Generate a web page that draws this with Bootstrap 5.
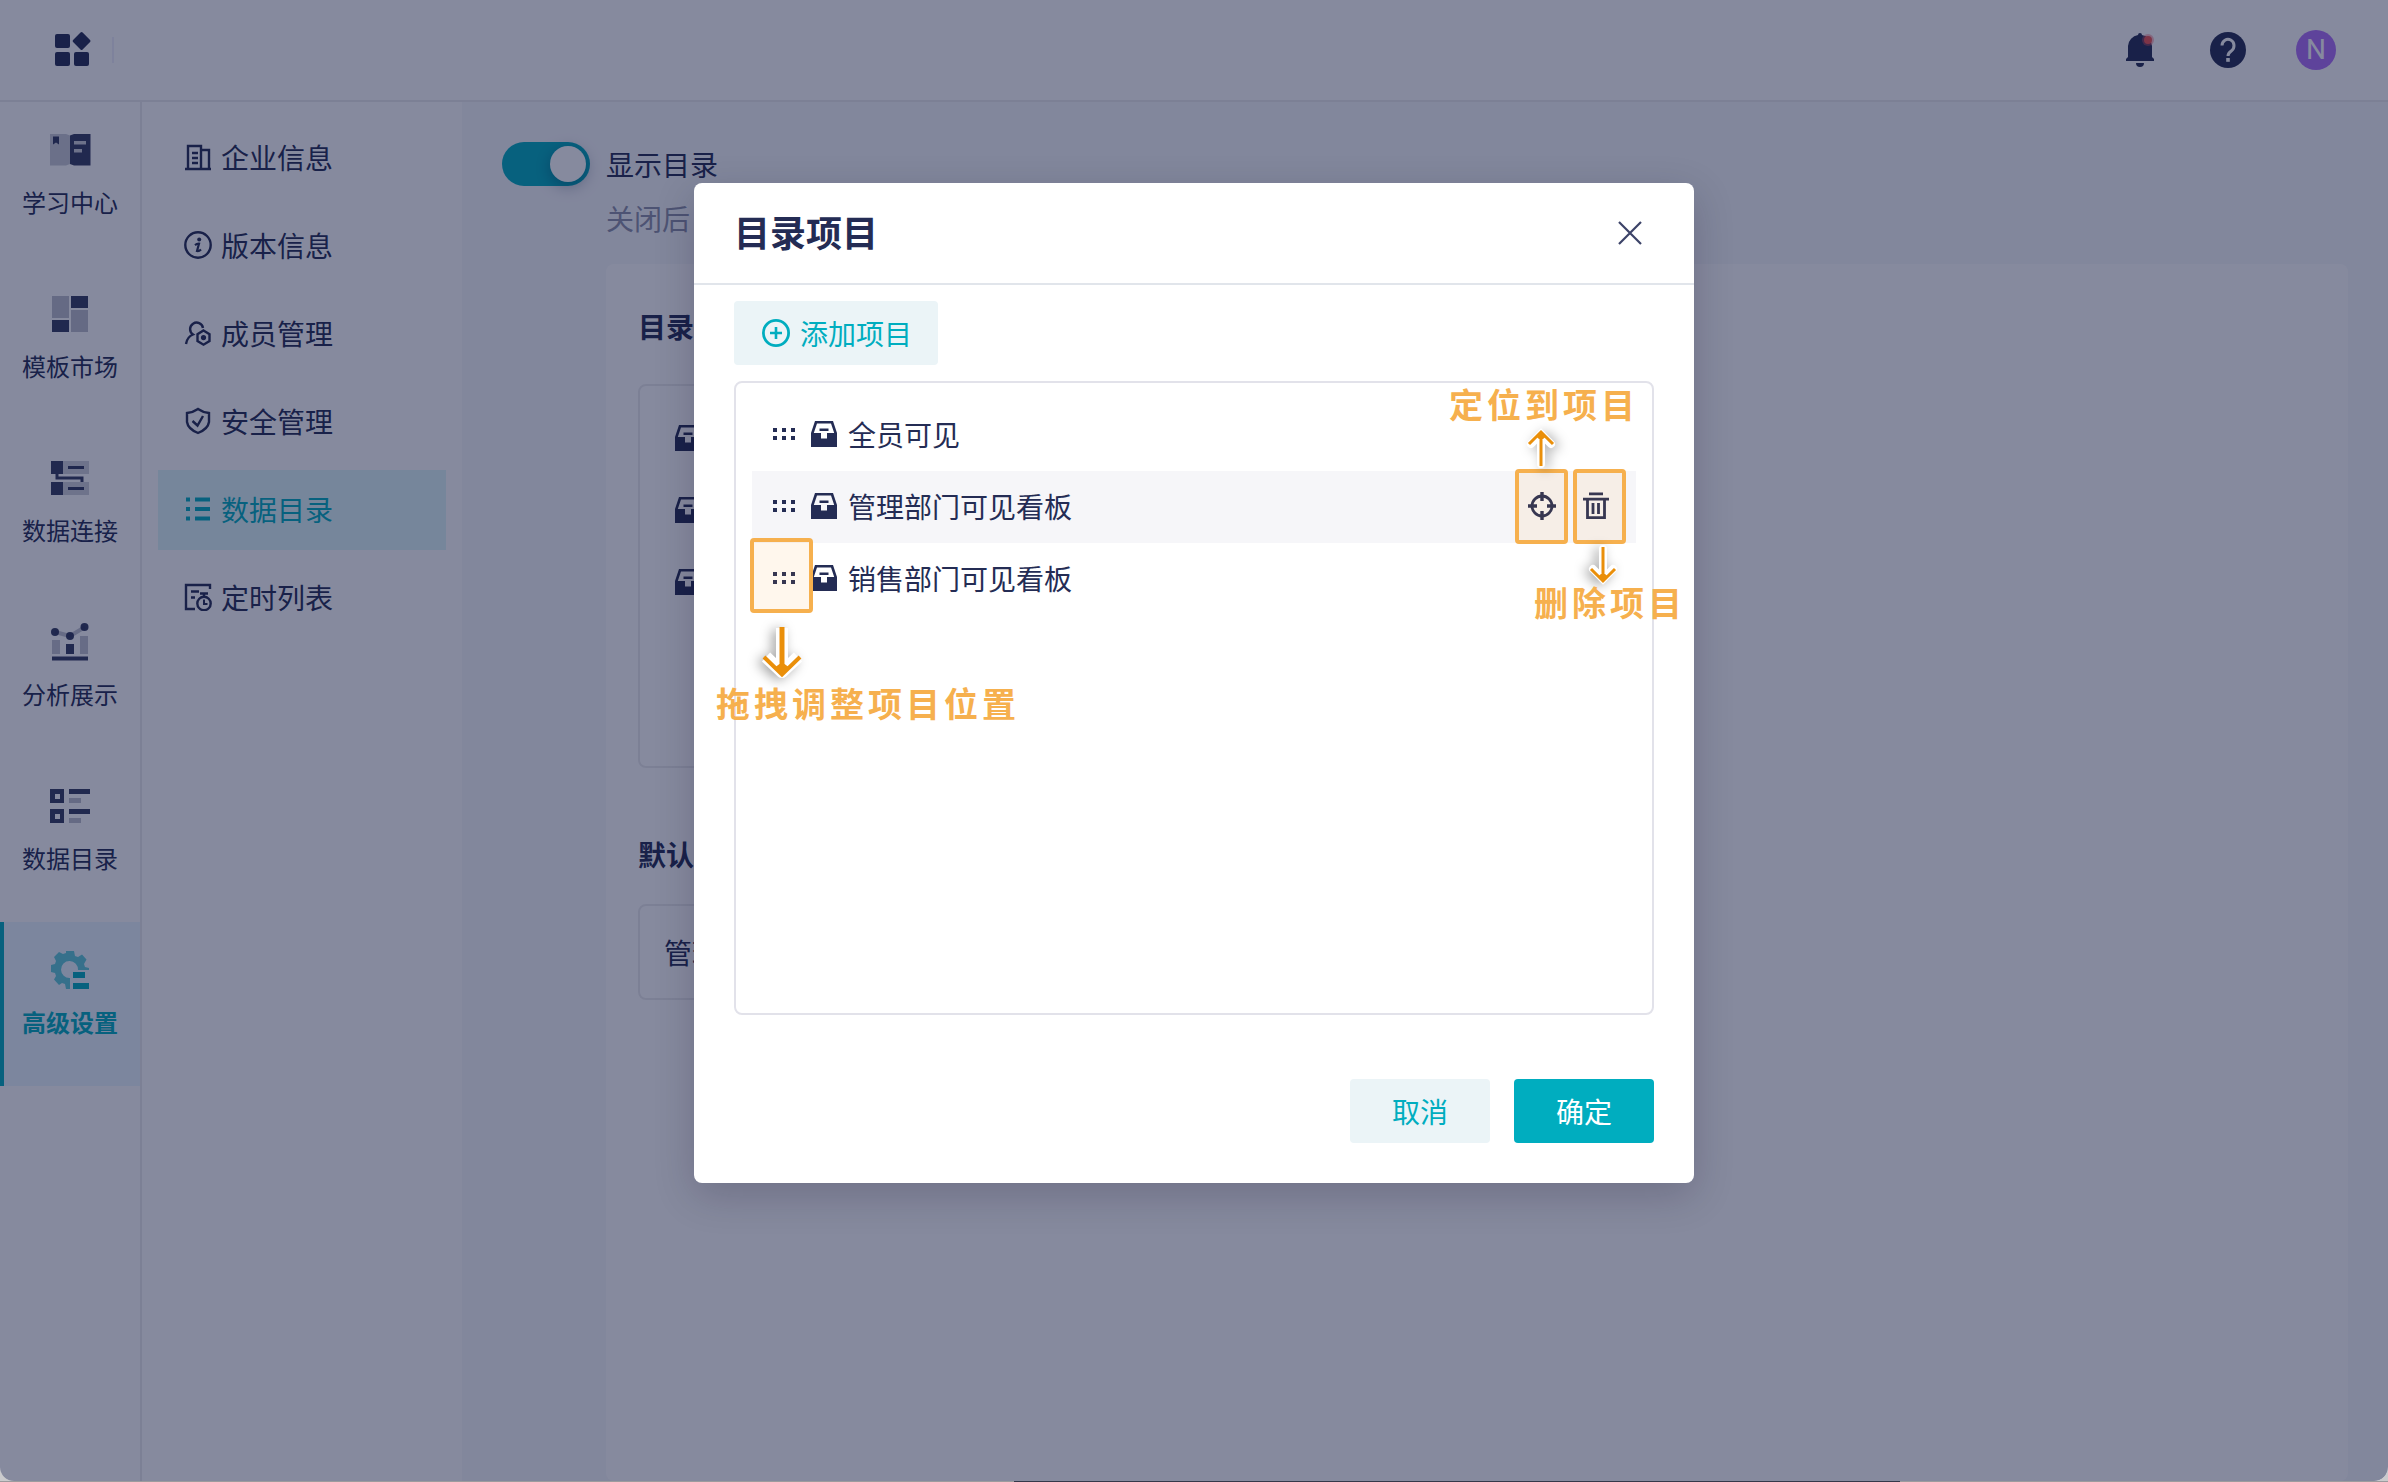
<!DOCTYPE html>
<html lang="zh-CN">
<head>
<meta charset="utf-8">
<meta name="viewport" content="width=device-width, initial-scale=1">
<title>数据目录</title>
<link href="https://cdn.jsdelivr.net/npm/bootstrap@5.3.0/dist/css/bootstrap.min.css" rel="stylesheet">
<style>
:root { --ink:#242c54; --teal:#00adbf; --line:#ebebed; --field:#e2e2ea; --tint:#ebf4f7; --note:#f6b04e; }
body { margin:0; background:#cbcbcd; color:var(--ink); font-family:"Noto Sans CJK SC",sans-serif; font-size:28px; line-height:40px; overflow:hidden; }
a { color:inherit; text-decoration:none; }
svg { display:block; flex:none; }
.app-window { height:calc(100vh - 1px); border-radius:0 0 14px 14px; overflow:hidden; background:#fff; }
.desk-edge { height:1px; background:#9c9c9e; }
.desk-edge span { display:block; width:886px; height:1px; margin-left:1014px; background:#34384a; }
.topbar { height:102px; padding:0 52px; border-bottom:2px solid var(--line); }
.topbar .divider { width:2px; height:26px; background:#eeeefa; margin-left:20px; }
.topbar-tools { gap:48px; }
.topbar-tools button, .plain-btn { border:0; background:none; padding:0; color:inherit; }
.topbar-tools .avatar { width:40px; height:40px; border-radius:50%; background:#af71f9; color:#fff; font-family:Roboto,sans-serif; line-height:40px; }
.rail { width:142px; border-right:2px solid var(--line); }
.rail a { height:164px; padding-top:24px; gap:10px; font-size:24px; line-height:36px; border-left:4px solid transparent; padding-right:4px; }
.rail a.active { background:#ebf7ff; border-left-color:var(--teal); color:var(--teal); font-weight:700; }
.submenu { width:320px; padding:16px; gap:8px; }
.submenu a { height:80px; padding:0 0 2px 26px; gap:9px; }
.submenu a.active { background:#dff7f9; color:var(--teal); }
.workspace { background:#f7f8fb; padding:38px 40px 0; }
.form-switch.dir-switch { padding:0; min-height:0; margin:0; gap:16px; align-items:flex-start; }
.dir-switch .form-check-input { width:88px; height:44px; margin:2px 0 0; border:0; float:none; flex:none; background-color:var(--teal); background-image:none; border-radius:22px; position:relative; }
.dir-switch .form-check-input::after { content:""; position:absolute; right:4px; top:4px; width:36px; height:36px; border-radius:50%; background:#fff; box-shadow:0 4px 16px rgba(0,20,60,.35); }
.hint-text { color:#8d91a9; margin-top:14px; }
.panel { margin:26px 0 0 104px; background:#fff; border-radius:8px; padding:42px 32px; }
.panel h2 { font-size:28px; line-height:40px; font-weight:700; margin:0; }
.dir-box { width:900px; min-height:384px; border:2px solid var(--line); border-radius:8px; padding:16px 34px; margin:38px 0 66px; }
.dir-row { height:72px; }
.form-select.page-select { width:900px; height:96px; margin-top:30px; border:2px solid var(--line); border-radius:8px; padding:0 24px; font-size:28px; color:var(--ink); }
.veil { position:absolute; inset:0; background:rgba(13,21,61,.5); }
.dialog-layer { position:absolute; inset:0; padding-top:183px; }
.dialog-layer .modal-dialog { width:1000px; max-width:1000px; margin:0 auto; }
.dialog-layer .modal-content { background:#fff; border:0; border-radius:8px; color:var(--ink); box-shadow:0 12px 40px rgba(20,10,40,.2); }
.dialog-layer .modal-header { height:102px; padding:0 50px 0 40px; border-bottom:2px solid #e1e5eb; }
.dialog-layer .modal-title { font-size:36px; line-height:52px; font-weight:700; padding-bottom:4px; }
.dialog-layer .modal-body { padding:16px 40px 0; }
.dialog-layer .modal-footer { padding:64px 40px 40px; border:0; gap:24px; }
.dialog-layer .modal-footer > * { margin:0; }
.dlg-btn { height:64px; min-width:140px; border:0; border-radius:4px; padding:0 28px; font-size:28px; line-height:40px; background:var(--tint); color:var(--teal); }
.dlg-btn.add-btn { padding:0 26px 0 28px; gap:10px; }
.dlg-btn.solid { background:var(--teal); color:#fff; }
.item-box { min-height:634px; margin-top:16px; border:2px solid var(--field); border-radius:8px; padding:16px; }
.item-row { height:72px; padding:0 26px 2px 18px; }
.item-row.hovered { background:#f6f6f9; }
.item-row .inbox { margin:0 10px 0 12px; }
.row-tools { gap:26px; }
.notes { position:absolute; inset:0; pointer-events:none; color:var(--note); }
.notes > * { position:absolute; }
.note-frame { border:4px solid var(--note); border-radius:4px; background:rgba(255,165,50,.09); width:53px; height:75px; top:286px; }
.frame-drag { left:56px; top:355px; width:63px; }
.frame-locate { left:821px; }
.frame-delete { left:879px; }
.note-arrow { overflow:visible; filter:drop-shadow(-4px 2px 6px rgba(0,0,0,.35)); }
.arrow-drag { left:65px; top:441px; }
.arrow-locate { left:832px; top:243px; filter:drop-shadow(4px 2px 6px rgba(0,0,0,.3)); }
.arrow-delete { left:894px; top:362px; }
.note-text { font-size:34px; line-height:48px; font-weight:700; white-space:nowrap; letter-spacing:4px; }
.text-drag { left:22px; top:496px; }
.text-locate { left:755px; top:197px; }
.text-delete { left:840px; top:395px; }
</style>
<script src="https://cdn.jsdelivr.net/npm/bootstrap@5.3.0/dist/js/bootstrap.bundle.min.js"></script>
</head>
<body>
<svg width="0" height="0" class="position-absolute" aria-hidden="true">
  <symbol id="i-inbox" viewBox="0 0 28 28"><path fill="currentColor" fill-rule="evenodd" d="M5 1H23L27 13V27H1V13ZM7 3.500L3.800 13H11V18.500H17V13H24.200L21 3.500Z"/><path fill="currentColor" d="M9.500 8.500h9v2.500h-9z"/></symbol>
  <symbol id="i-grip" viewBox="0 0 28 28"><path fill="currentColor" d="M3 8h4v4H3zM12 8h4v4h-4zM21 8h4v4h-4zM3 16h4v4H3zM12 16h4v4h-4zM21 16h4v4h-4z"/></symbol>
  <symbol id="arrow-down" viewBox="0 0 30 42"><path d="M15 4V34M5 24L15 34L25 24" fill="none" stroke="#fff" stroke-width="8" stroke-linecap="round"/><path d="M15 2V34M3 24L15 36L27 24" fill="none" stroke="#ea8f0a" stroke-width="3"/><path fill="#ea8f0a" d="M13 29L10 31.500L15 37L20 31.500L17 29z"/></symbol>
</svg>

<div class="app-window position-relative">
  <div class="d-flex flex-column h-100">
    <header class="topbar d-flex align-items-center flex-shrink-0">
      <a href="#" aria-label="应用"><svg width="40" height="40" viewBox="0 0 40 40" fill="currentColor"><rect x="3" y="4" width="15" height="14" rx="2"/><rect x="3" y="22" width="15" height="14" rx="2"/><rect x="22" y="22" width="15" height="14" rx="2"/><rect x="22.800" y="4.200" width="13.500" height="13.500" rx="1.500" transform="rotate(45 29.500 11)"/></svg></a>
      <span class="divider"></span>
      <div class="topbar-tools d-flex align-items-center ms-auto">
        <button aria-label="通知"><svg width="40" height="40" viewBox="0 0 40 40" fill="currentColor"><path d="M18 5a2 2 0 0 1 4 0 12 12 0 0 1 10 11v11l2 2v2H6v-2l2-2V16A12 12 0 0 1 18 5zM16 33h8a4 4 0 0 1-8 0z"/><circle cx="28" cy="10" r="6" fill="#ef5566" opacity=".4"/><circle cx="28" cy="10" r="4" fill="#ef5350"/></svg></button>
        <button aria-label="帮助"><svg width="40" height="40" viewBox="0 0 40 40"><circle cx="20" cy="20" r="18" fill="currentColor"/><path d="M14 15.500a6 6.300 0 1 1 9.500 5.200C21 22.500 20 23.500 20 26" fill="none" stroke="#fff" stroke-width="3"/><path fill="#fff" d="M18.200 28h3.600v3.800h-3.600z"/></svg></button>
        <button class="avatar">N</button>
      </div>
    </header>
    <div class="d-flex flex-grow-1">
      <nav class="rail d-flex flex-column flex-shrink-0">
        <a href="#" class="d-flex flex-column align-items-center"><svg width="48" height="48" viewBox="0 0 48 48" fill="currentColor"><path opacity=".25" d="M4 8h16l4 1.500v28.500l-4 1.500H4z"/><g opacity=".92"><path d="M24 9.500L28 8H44.500V39.500H28L24 38z"/><path d="M7 10.500h6v8l-3-2-3 2z"/></g><path fill="#fff" opacity=".75" d="M28 15h12v3.500H28zM28 23h8v3.500h-8z"/></svg>学习中心</a>
        <a href="#" class="d-flex flex-column align-items-center"><svg width="48" height="48" viewBox="0 0 48 48" fill="currentColor"><path opacity=".3" d="M6 6h17v22H6zM25 20h17v22H25z"/><path opacity=".92" d="M25 6h17v12H25zM6 30h17v12H6z"/></svg>模板市场</a>
        <a href="#" class="d-flex flex-column align-items-center"><svg width="48" height="48" viewBox="0 0 48 48" fill="currentColor"><path opacity=".22" d="M17 7h26v13H17zM17 28h26v13H17z"/><g opacity=".92"><path d="M5 7h12v13H5zM5 28h12v13H5zM22 12h16v3H22zM22 33h16v3H22z"/><path d="M11 20v4h25v4" fill="none" stroke="currentColor" stroke-width="3"/></g></svg>数据连接</a>
        <a href="#" class="d-flex flex-column align-items-center"><svg width="48" height="48" viewBox="0 0 48 48" fill="currentColor"><g opacity=".28"><path d="M6 22h8v14H6zM34 18h8v18h-8z"/><path d="M9 14L24 18L39 9" fill="none" stroke="currentColor" stroke-width="4"/></g><g opacity=".92"><circle cx="9" cy="14" r="4"/><circle cx="24" cy="18" r="4"/><circle cx="38.500" cy="9" r="4"/><path d="M20 26h8v10h-8zM6 38.500h36v4H6z"/></g></svg>分析展示</a>
        <a href="#" class="d-flex flex-column align-items-center"><svg width="48" height="48" viewBox="0 0 48 48" fill="currentColor"><g opacity=".92"><path fill-rule="evenodd" d="M4 7h14v14H4zm5 5v5h5v-5zM4 27h14v14H4zm5 5v5h5v-5z"/><path d="M23 7h21v5H23zM23 27h21v5H23z"/></g><path opacity=".3" d="M23 16h12v5H23zM23 36h12v5H23z"/></svg>数据目录</a>
        <a href="#" class="active d-flex flex-column align-items-center"><svg width="48" height="48" viewBox="0 0 48 48" fill="currentColor"><path opacity=".6" d="M20 5h8l1 5 3 1 4-2.500 4.500 5L38 18l1 3 4 1v2H32a8.500 8.500 0 1 0-8 8v11h-4l-1-5-3-1-3 2-5-5.500 2-3.500-1-3-4-1v-7l4-1 1-3-2-4 5-5 4 2 3-1z"/><path d="M27 26h12v6H27zM27 37h16v6H27z"/></svg>高级设置</a>
      </nav>
      <nav class="submenu d-flex flex-column flex-shrink-0">
        <a href="#" class="d-flex align-items-center"><svg width="28" height="28" viewBox="0 0 28 28" fill="none" stroke="currentColor" stroke-width="2.400"><path d="M1 26h26M4 26V3h13v23M17 7h8v19M8 10h6M8 15h6M8 20h6"/></svg>企业信息</a>
        <a href="#" class="d-flex align-items-center"><svg width="28" height="28" viewBox="0 0 28 28"><circle cx="14" cy="14" r="12.700" fill="none" stroke="currentColor" stroke-width="2.400"/><circle cx="15.200" cy="8.500" r="2" fill="currentColor"/><path d="M11 14.200Q13 12.500 15 12.700L13 20Q15 20.500 17 18.500" fill="none" stroke="currentColor" stroke-width="2.200"/></svg>版本信息</a>
        <a href="#" class="d-flex align-items-center"><svg width="28" height="28" viewBox="0 0 28 28" fill="none" stroke="currentColor" stroke-width="2.400"><path d="M2 25Q3 18 9 15.500A6.500 6.500 0 1 1 19 9M19.500 11.500l6 3.600v7l-6 3.600-6-3.600v-7z"/><circle cx="19.500" cy="18.600" r="2.600" fill="currentColor" stroke="none"/></svg>成员管理</a>
        <a href="#" class="d-flex align-items-center"><svg width="28" height="28" viewBox="0 0 28 28" fill="none" stroke="currentColor" stroke-width="2.400"><path d="M14 2Q19 5.500 25 6V15Q24 22 14 26Q4 22 3 15V6Q9 5.500 14 2z"/><path d="M8.500 14l5 4.500 5.500-9.500"/></svg>安全管理</a>
        <a href="#" class="active d-flex align-items-center"><svg width="28" height="28" viewBox="0 0 28 28" fill="currentColor"><path d="M2 2.500h4v4H2zM2 12h4v4H2zM2 21.500h4v4H2zM11 2.500h15v4H11zM11 12h15v4H11zM11 21.500h15v4H11z"/></svg>数据目录</a>
        <a href="#" class="d-flex align-items-center"><svg width="28" height="28" viewBox="0 0 28 28" fill="none" stroke="currentColor" stroke-width="2.400"><path d="M26 6V2H2V26H11M7 8.500h8M7 14.500h4M16 10.500h8M20 10.500v3"/><circle cx="20" cy="20.500" r="6.700"/><path d="M20 16.500v4.500h3.500" stroke-width="2"/></svg>定时列表</a>
      </nav>
      <main class="workspace flex-grow-1 d-flex flex-column">
        <div class="form-check form-switch dir-switch d-flex">
          <input class="form-check-input" type="checkbox" role="switch" id="showDir" checked>
          <div><label for="showDir" class="d-block mt-1">显示目录</label><div class="hint-text">关闭后</div></div>
        </div>
        <section class="panel flex-grow-1">
          <h2>目录</h2>
          <div class="dir-box">
            <div class="dir-row d-flex align-items-center"><svg width="28" height="28"><use href="#i-inbox"/></svg></div>
            <div class="dir-row d-flex align-items-center"><svg width="28" height="28"><use href="#i-inbox"/></svg></div>
            <div class="dir-row d-flex align-items-center"><svg width="28" height="28"><use href="#i-inbox"/></svg></div>
          </div>
          <h2><label for="defPage">默认</label></h2>
          <select class="form-select page-select" id="defPage"><option>管理部门可见看板</option></select>
        </section>
      </main>
    </div>
  </div>

  <div class="veil"></div>
  <div class="dialog-layer" role="dialog" aria-modal="true" aria-labelledby="dlgTitle">
    <div class="modal-dialog">
      <div class="modal-content">
        <div class="modal-header">
          <h1 class="modal-title" id="dlgTitle">目录项目</h1>
          <button class="plain-btn" aria-label="关闭"><svg width="28" height="28" viewBox="0 0 28 28"><path d="M3 3L25 25M25 3L3 25" stroke="#3c4368" stroke-width="2.200"/></svg></button>
        </div>
        <div class="modal-body">
          <button class="dlg-btn add-btn d-inline-flex align-items-center"><svg width="28" height="28" viewBox="0 0 28 28"><circle cx="14" cy="14" r="12.600" fill="none" stroke="currentColor" stroke-width="2.800"/><path d="M14 8v12M8 14h12" stroke="currentColor" stroke-width="2.600"/></svg>添加项目</button>
          <div class="item-box">
            <div class="item-row d-flex align-items-center"><svg width="28" height="28"><use href="#i-grip"/></svg><svg class="inbox" width="28" height="28"><use href="#i-inbox"/></svg>全员可见</div>
            <div class="item-row hovered d-flex align-items-center"><svg width="28" height="28"><use href="#i-grip"/></svg><svg class="inbox" width="28" height="28"><use href="#i-inbox"/></svg>管理部门可见看板
              <div class="row-tools d-flex ms-auto">
                <button class="plain-btn" aria-label="定位到项目"><svg width="28" height="28" viewBox="0 0 28 28" fill="none" stroke="currentColor"><circle cx="14" cy="14" r="10" stroke-width="2.800"/><path d="M14 0v9M14 19v9M0 14h9M19 14h9" stroke-width="3.400"/></svg></button>
                <button class="plain-btn" aria-label="删除项目"><svg width="28" height="28" viewBox="0 0 28 28" fill="none" stroke="currentColor"><path d="M7 1.800h14M1 7.200h26M5.500 7v18.700h17V7" stroke-width="2.800"/><path d="M11 11v11M16.500 11v11" stroke-width="2.800"/></svg></button>
              </div>
            </div>
            <div class="item-row d-flex align-items-center"><svg width="28" height="28"><use href="#i-grip"/></svg><svg class="inbox" width="28" height="28"><use href="#i-inbox"/></svg>销售部门可见看板</div>
          </div>
        </div>
        <div class="modal-footer">
          <button class="dlg-btn">取消</button>
          <button class="dlg-btn solid">确定</button>
        </div>
        <!-- guide marks drawn over the dialog -->
        <div class="notes">
          <div class="note-frame frame-drag"></div>
          <svg class="note-arrow arrow-drag" width="46" height="58" viewBox="0 0 46 58"><path d="M23 4V46M7 33L23 48L39 33" fill="none" stroke="#fff" stroke-width="12" stroke-linejoin="round"/><path d="M23 3V50" stroke="#ea8f0a" stroke-width="5"/><path d="M5 33L23 50.500L41 33" fill="none" stroke="#ea8f0a" stroke-width="4"/><path fill="#ea8f0a" d="M20.500 40L15 44L23 52L31 44L25.500 40z"/></svg>
          <div class="note-text text-drag">拖拽调整项目位置</div>
          <div class="note-frame frame-locate"></div>
          <div class="note-frame frame-delete"></div>
          <svg class="note-arrow arrow-locate" width="30" height="42" viewBox="0 0 30 42"><use href="#arrow-down" transform="rotate(180 15 21)"/></svg>
          <svg class="note-arrow arrow-delete" width="30" height="42" viewBox="0 0 30 42"><use href="#arrow-down"/></svg>
          <div class="note-text text-locate">定位到项目</div>
          <div class="note-text text-delete">删除项目</div>
        </div>
      </div>
    </div>
  </div>
</div>
<div class="desk-edge"><span></span></div>
</body>
</html>
